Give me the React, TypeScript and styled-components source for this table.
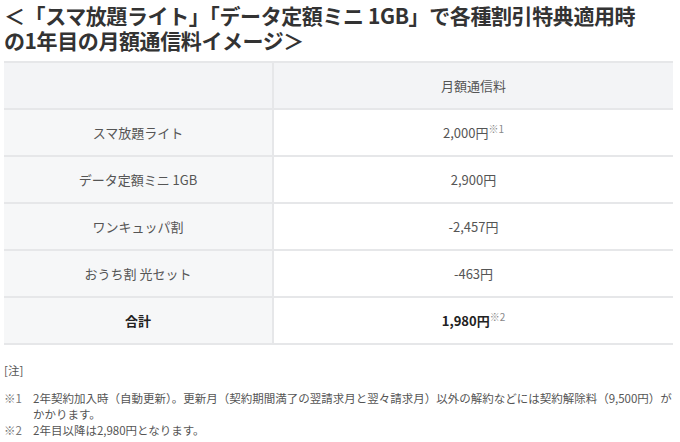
import styled, { createGlobalStyle } from "styled-components";

const GlobalStyle = createGlobalStyle`
  body {
    margin: 0;
    background: #fff;
    font-family: "Noto Sans CJK JP", "Noto Sans", sans-serif;
    color: #444;
  }
`;

const rows = [
  { label: "スマ放題ライト", price: "2,000円", note: "※1" },
  { label: "データ定額ミニ 1GB", price: "2,900円" },
  { label: "ワンキュッパ割", price: "-2,457円" },
  { label: "おうち割 光セット", price: "-463円" },
];

function App() {
  return (
    <>
      <GlobalStyle />
      <Page>
        <Title>
          ＜「スマ放題ライト」「データ定額ミニ 1GB」で各種割引特典適用時
          <br />
          の1年目の月額通信料イメージ＞
        </Title>
        <PriceTable>
          <thead>
            <tr>
              <HeadCell />
              <HeadCell>月額通信料</HeadCell>
            </tr>
          </thead>
          <tbody>
            {rows.map((r) => (
              <tr key={r.label}>
                <LabelCell>{r.label}</LabelCell>
                <ValueCell>
                  {r.price}
                  {r.note && <Sup>{r.note}</Sup>}
                </ValueCell>
              </tr>
            ))}
            <tr>
              <LabelCell $total>合計</LabelCell>
              <ValueCell $total>
                1,980円<Sup>※2</Sup>
              </ValueCell>
            </tr>
          </tbody>
        </PriceTable>
        <Notes>
          <NoteHead>[注]</NoteHead>
          <NoteRow>
            <Mark>※1</Mark>
            <span>
              2年契約加入時（自動更新）。更新月（契約期間満了の翌請求月と翌々請求月）以外の解約などには契約解除料（9,500円）が
              <br />
              かかります。
            </span>
          </NoteRow>
          <NoteRow>
            <Mark>※2</Mark>
            <span>2年目以降は2,980円となります。</span>
          </NoteRow>
        </Notes>
      </Page>
    </>
  );
}

const Page = styled.div`
  width: 680px;
  padding: 3px 7px 0 4px;
  box-sizing: border-box;
`;

const Title = styled.h1`
  margin: 0;
  font-size: 21px;
  font-weight: 700;
  line-height: 25px;
  color: #333;
  letter-spacing: -0.4px;
  white-space: nowrap;
`;

const PriceTable = styled.table`
  margin-top: 8px;
  width: 669px;
  border-collapse: collapse;
  border-top: 2px solid #e6e7e9;
  border-bottom: 2px solid #e6e7e9;
  font-size: 13px;
  color: #555;

  td,
  th {
    height: 45px;
    padding: 0;
    text-align: center;
    border-bottom: 2px solid #e6e7e9;
  }
`;

const HeadCell = styled.th`
  background: #f3f4f6;
  font-weight: 400;
  &:first-child {
    width: 268px;
    border-right: 2px solid #e6e7e9;
  }
`;

const LabelCell = styled.td<{ $total?: boolean }>`
  background: #f6f7f8;
  border-right: 2px solid #e6e7e9;
  font-weight: ${(p) => (p.$total ? 700 : 400)};
  color: ${(p) => (p.$total ? "#222" : "#555")};
`;

const ValueCell = styled.td<{ $total?: boolean }>`
  background: #fff;
  font-weight: ${(p) => (p.$total ? 700 : 400)};
  color: ${(p) => (p.$total ? "#222" : "#555")};
`;

const Sup = styled.sup`
  font-size: 10px;
  font-weight: 400;
  color: #888;
  vertical-align: 5px;
  line-height: 0;
`;

const Notes = styled.div`
  margin-top: 17px;
  font-size: 11.5px;
  color: #555;
  line-height: 16px;
`;

const NoteHead = styled.div`
  margin-bottom: 12px;
`;

const NoteRow = styled.div`
  display: flex;
  white-space: nowrap;
`;

const Mark = styled.span`
  width: 29px;
  flex-shrink: 0;
  color: #777;
`;

export default App;
